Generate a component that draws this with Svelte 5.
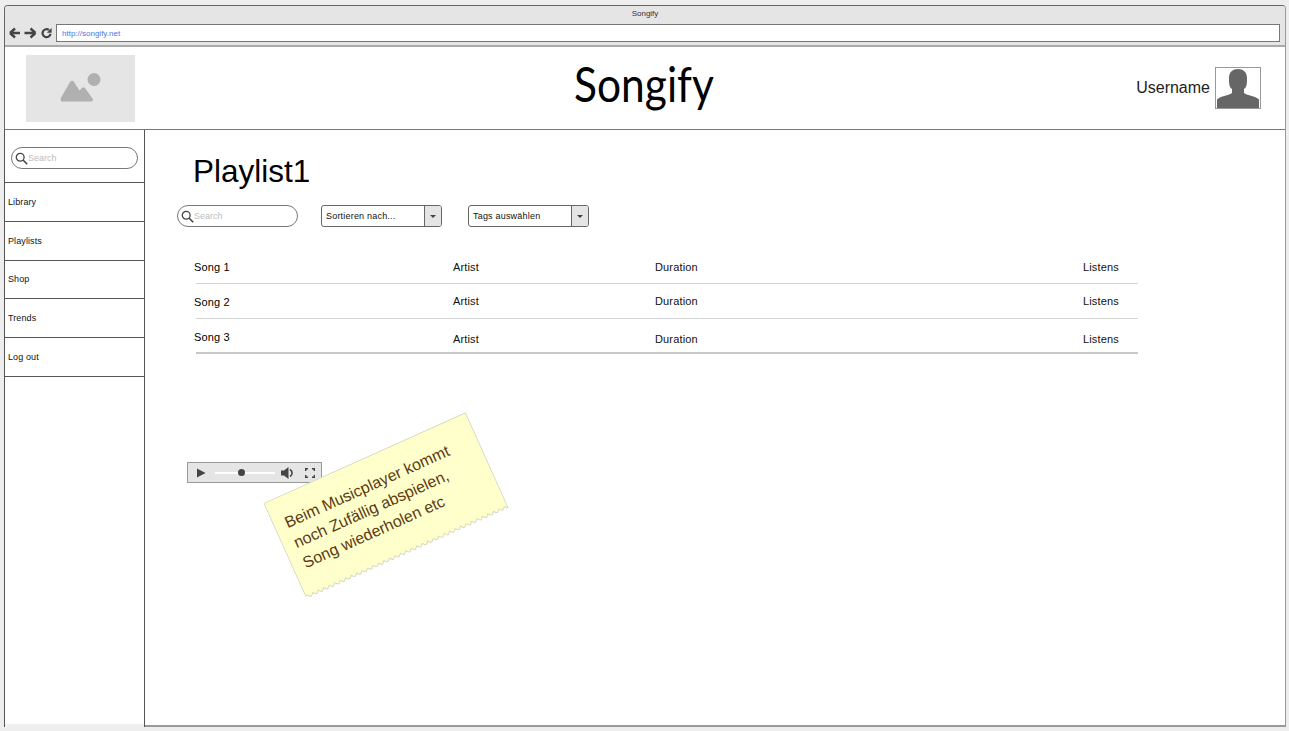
<script>
    const navItems = ['Library', 'Playlists', 'Shop', 'Trends', 'Log out'];
    const songs = [
        { name: 'Song 1', songTop: 0, infoTop: 0 },
        { name: 'Song 2', songTop: -1, infoTop: -2 },
        { name: 'Song 3', songTop: 0, infoTop: 4 }
    ];

    // note paper with torn bottom edge
    const noteW = 222;
    const noteH = 105;
    function notePoints() {
        const pts = [`0.5,0.5`, `${noteW - 0.5},0.5`, `${noteW - 0.5},${noteH - 3}`];
        for (let x = noteW - 0.5, i = 0; x > 0; x -= 3, i++) {
            pts.push(`${x},${i % 2 ? noteH - 3 : noteH}`);
        }
        pts.push(`0.5,${noteH - 3}`);
        return pts.join(' ');
    }
</script>

{#snippet searchBox(cls)}
    <div class="search {cls}">
        <svg width="13" height="13" viewBox="0 0 13 13">
            <circle cx="5.2" cy="5.2" r="3.9" fill="none" stroke="#444" stroke-width="1.3" />
            <path d="M8 8l4.2 4.2" stroke="#444" stroke-width="1.6" />
        </svg>
        <span>Search</span>
    </div>
{/snippet}

{#snippet select(label)}
    <div class="select">
        <span class="select-label">{label}</span>
        <span class="select-btn"><i></i></span>
    </div>
{/snippet}

<div class="window">
    <div class="chrome">
        <div class="chrome-title">Songify</div>
        <div class="chrome-bar">
            <svg class="nav-icons" width="44" height="12" viewBox="0 0 44 12">
                <path d="M1 6l5-4.5M1 6l5 4.5M1.5 6H11" fill="none" stroke="#444" stroke-width="2.4" />
                <path d="M26.5 6l-5-4.5M26.500 6l-5 4.5M26 6H15.5" fill="none" stroke="#444" stroke-width="2.4" />
                <path d="M41.5 6.8A4 4 0 1 1 40 3" fill="none" stroke="#444" stroke-width="2.2" />
                <path d="M37.8 5.8h4.8V1z" fill="#444" />
            </svg>
            <div class="url">http://songify.net</div>
        </div>
    </div>

    <header class="header">
        <div class="logo">
            <svg width="44" height="30" viewBox="0 0 44 30">
                <path d="M2 27.5c-1-1 0-3 1-4.5L11 9c1-1.800 3-1.800 4 0l5.500 8.500 2.500-2.500c1-1 2-1 3 0l7.500 10.500c1 1.500.5 3-1.500 3H4c-1 0-1.500 0-2-.5z" fill="#b0b0b0" />
                <circle cx="35" cy="6.500" r="6.500" fill="#b0b0b0" />
            </svg>
        </div>
        <div class="brand">Songify</div>
        <div class="user">
            <span>Username</span>
            <div class="avatar">
                <svg width="44" height="40" viewBox="0 0 44 40">
                    <path d="M1 40V31.500C5 27.500 12 28 16 25V21C13 19 13 15 13 10C13 4 17 1 22 1C27 1 31 4 31 10C31 15 31 19 28 21V25C32 28 39 27.500 43 31.500V40Z" fill="#666" />
                </svg>
            </div>
        </div>
    </header>

    <div class="body">
        <aside class="sidebar">
            <div class="side-search">{@render searchBox('side')}</div>
            {#each navItems as item}
                <div class="nav-item">{item}</div>
            {/each}
            <div class="side-foot"></div>
        </aside>

        <main class="main">
            <h1>Playlist1</h1>
            <div class="toolbar">
                {@render searchBox('top')}
                {@render select('Sortieren nach...')}
                {@render select('Tags auswählen')}
            </div>

            <div class="songs">
                {#each songs as song}
                    <div class="song-row">
                        <span class="song-name" style="margin-top: {song.songTop}px">{song.name}</span>
                        <span style="margin-top: {song.infoTop}px">Artist</span>
                        <span style="margin-top: {song.infoTop}px">Duration</span>
                        <span style="margin-top: {song.infoTop}px">Listens</span>
                    </div>
                {/each}
            </div>

            <div class="player">
                <svg width="10" height="10" viewBox="0 0 10 10"><path d="M1 0.500L9.500 5 1 9.500z" fill="#444" /></svg>
                <div class="track"><i></i></div>
                <svg width="13" height="12" viewBox="0 0 13 12">
                    <path d="M0 3.500h3L7.500 0v12L3 8.500H0z" fill="#444" />
                    <path d="M9 2.500a4 4 0 0 1 0 7" fill="none" stroke="#444" stroke-width="1.600" />
                </svg>
                <svg class="full" width="10" height="10" viewBox="0 0 10 10">
                    <path d="M.7 3V.7H3M7 .7h2.300V3M9.300 7v2.300H7M3 9.300H.7V7" fill="none" stroke="#444" stroke-width="1.400" />
                </svg>
            </div>

            <div class="note">
                <svg width={noteW} height={noteH} viewBox="0 0 {noteW} {noteH}">
                    <polygon points={notePoints()} fill="#ffffcc" stroke="#d8d8c0" />
                </svg>
                <p>Beim Musicplayer kommt<br />noch Zufällig abspielen,<br />Song wiederholen etc</p>
            </div>
        </main>
    </div>
</div>

<style>
    :global(body) {
        background: #eeeeee;
        overflow: hidden;
    }
    .window {
        box-sizing: border-box;
        width: 1282px;
        height: 722px;
        margin: 5px 0 0 4px;
        background: #fff;
        border: 1px solid #666;
        border-right-color: #999;
        border-bottom: 2px solid #999;
        border-radius: 4px 4px 0 0;
        font-family: 'Liberation Sans', Arial, sans-serif;
        color: #000;
        display: flex;
        flex-direction: column;
    }
    .chrome {
        height: 41px;
        flex: none;
        box-sizing: border-box;
        background: #e5e5e5;
        border-bottom: 2px solid #aaa;
        border-radius: 3px 3px 0 0;
    }
    .chrome-title {
        height: 18px;
        line-height: 16px;
        text-align: center;
        font-size: 8px;
        color: #333;
    }
    .chrome-bar {
        display: flex;
        align-items: center;
        gap: 3px;
        padding: 0 5px 0 4px;
    }
    .nav-icons {
        flex: none;
    }
    .url {
        flex: 1;
        height: 18px;
        box-sizing: border-box;
        border: 1px solid #777;
        background: #fff;
        font-size: 8px;
        line-height: 18px;
        padding-left: 5px;
        color: #4a76e8;
    }
    .header {
        flex: none;
        height: 83px;
        box-sizing: border-box;
        border-bottom: 1px solid #777;
        display: grid;
        grid-template-columns: 1fr auto 1fr;
        align-items: center;
        padding: 0 24px 0 21px;
    }
    .logo {
        width: 109px;
        height: 67px;
        background: #e5e5e5;
        display: flex;
        align-items: center;
        justify-content: center;
    }
    .brand {
        font-family: 'Comic Sans MS', 'Lato', cursive;
        font-size: 48px;
        font-weight: 400;
        line-height: 60px;
        margin-top: -9px;
        transform: scaleX(0.885);
    }
    .user {
        justify-self: end;
        display: flex;
        align-items: center;
        gap: 5px;
        font-size: 16px;
        color: #222;
    }
    .avatar {
        width: 46px;
        height: 42px;
        box-sizing: border-box;
        border: 1px solid #999;
        display: flex;
        overflow: hidden;
    }
    .body {
        flex: 1;
        display: flex;
        min-height: 0;
    }
    .sidebar {
        flex: none;
        width: 141px;
        height: 599px;
        margin-left: -1px;
        box-sizing: border-box;
        border-left: 1px solid #555;
        border-right: 1px solid #555;
        border-bottom: 1px solid #555;
        background: #fff;
        display: flex;
        flex-direction: column;
    }
    .side-search {
        height: 53px;
        flex: none;
        box-sizing: border-box;
        border-bottom: 1px solid #555;
        padding: 18px 6px 0 6px;
    }
    .side-search .search {
        margin-top: -1px;
    }
    .nav-item {
        flex: none;
        height: 38.800px;
        box-sizing: border-box;
        border-bottom: 1px solid #555;
        padding-left: 3px;
        display: flex;
        align-items: center;
        font-size: 9px;
        letter-spacing: 0.1px;
        color: #111;
    }
    .side-foot {
        margin-top: auto;
        height: 4px;
        background: #f0f0f0;
    }
    .search {
        box-sizing: border-box;
        height: 22px;
        border: 1px solid #777;
        border-radius: 11px;
        display: flex;
        align-items: center;
        padding-left: 3px;
        font-size: 9px;
        color: #bdbdbd;
    }
    .search.top {
        width: 121px;
    }
    .main {
        flex: 1;
        min-width: 0;
        position: relative;
    }
    h1 {
        margin: 24px 0 0 48px;
        font-size: 31.500px;
        font-weight: 400;
        line-height: 34px;
    }
    .toolbar {
        display: flex;
        gap: 23px;
        margin: 17px 0 0 32px;
    }
    .select {
        box-sizing: border-box;
        width: 121px;
        height: 22px;
        border: 1px solid #666;
        border-radius: 3px;
        display: flex;
        font-size: 9px;
        letter-spacing: 0.2px;
        color: #111;
    }
    .select + .select {
        margin-left: 3px;
    }
    .select-label {
        flex: 1;
        line-height: 20px;
        padding-left: 4px;
    }
    .select-btn {
        width: 16px;
        background: #e5e5e5;
        border-left: 1px solid #666;
        border-radius: 0 2px 2px 0;
        display: flex;
        align-items: center;
        justify-content: center;
    }
    .select-btn i {
        width: 0;
        height: 0;
        border: 3px solid transparent;
        border-top: 3px solid #444;
        border-bottom: 0;
    }
    .songs {
        margin: 22px 0 0 51px;
        width: 942px;
    }
    .song-row {
        height: 35px;
        box-sizing: border-box;
        padding-top: 2px;
        border-bottom: 1px solid #d4d4d4;
        display: grid;
        grid-template-columns: 257px 202px 428px 1fr;
        font-size: 11px;
        letter-spacing: 0.15px;
        color: #111;
        align-items: center;
    }
    .song-row:last-child {
        border-bottom: 2px solid #c8c8c8;
    }
    .song-name {
        margin-left: -2px;
        color: #000;
    }
    .player {
        box-sizing: border-box;
        width: 135px;
        height: 21px;
        margin: 108px 0 0 42px;
        background: #e5e5e5;
        border: 1px solid #999;
        display: flex;
        align-items: center;
        padding-left: 8px;
    }
    .track {
        width: 60px;
        height: 2px;
        background: #fff;
        margin: 0 6px 0 9px;
        position: relative;
    }
    .track i {
        position: absolute;
        left: 23px;
        top: -2.500px;
        width: 7px;
        height: 7px;
        border-radius: 50%;
        background: #444;
    }
    .full {
        margin-left: 11px;
    }
    .note {
        position: absolute;
        left: 130px;
        top: 323px;
        width: 222px;
        height: 105px;
        transform: rotate(-24.200deg);
    }
    .note svg {
        display: block;
    }
    .note p {
        position: absolute;
        left: 12px;
        top: 17px;
        margin: 0;
        white-space: nowrap;
        font-size: 16px;
        line-height: 22px;
        color: #5c3a12;
    }
</style>
